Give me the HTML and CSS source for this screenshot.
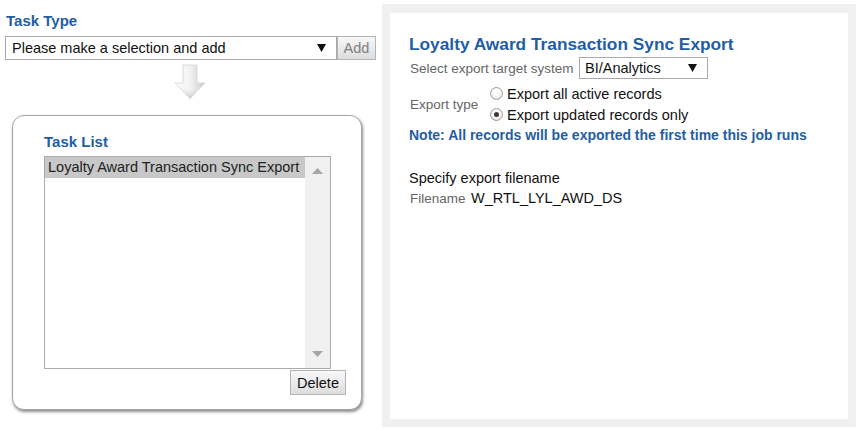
FILE: index.html
```html
<!DOCTYPE html>
<html>
<head>
<meta charset="utf-8">
<link rel="stylesheet" href="styles.css">
</head>
<body>
<div class="page">
  <div class="left">
    <div class="heading task-type-title">Task Type</div>
    <div class="type-row">
      <div class="fake-select type-select">
        <span>Please make a selection and add</span>
        <svg class="caret" width="9" height="8" viewBox="0 0 9 8"><polygon points="0,0 9,0 4.5,8" fill="#111"/></svg>
      </div>
      <div class="btn add-btn">Add</div>
    </div>
    <div class="arrow-wrap">
      <svg width="32" height="36" viewBox="0 0 32 36">
        <defs>
          <linearGradient id="ag" x1="0" y1="0" x2="1" y2="0">
            <stop offset="0" stop-color="#ffffff"/>
            <stop offset="0.5" stop-color="#f2f2f2"/>
            <stop offset="1" stop-color="#c9c9c9"/>
          </linearGradient>
          <linearGradient id="av" x1="0" y1="0" x2="0" y2="1">
            <stop offset="0.6" stop-color="#ffffff" stop-opacity="0"/>
            <stop offset="1" stop-color="#bdbdbd" stop-opacity="0.8"/>
          </linearGradient>
        </defs>
        <polygon points="9,1 23,1 23,19 31,19 16,34.5 1,19 9,19" fill="url(#ag)" stroke="#dadada" stroke-width="1"/>
        <polygon points="9,1 23,1 23,19 31,19 16,34.5 1,19 9,19" fill="url(#av)"/>
      </svg>
    </div>
    <div class="task-box">
      <div class="heading">Task List</div>
      <div class="listbox">
        <div class="list-items">
          <div class="list-item selected">Loyalty Award Transaction Sync Export</div>
        </div>
        <div class="scrollbar">
          <svg width="11" height="6" viewBox="0 0 11 6"><polygon points="0,6 11,6 5.5,0" fill="#a6a6a6"/></svg>
          <svg width="11" height="6" viewBox="0 0 11 6"><polygon points="0,0 11,0 5.5,6" fill="#a6a6a6"/></svg>
        </div>
      </div>
      <div class="btn-row">
        <div class="btn delete-btn">Delete</div>
      </div>
    </div>
  </div>
  <div class="right">
    <div class="panel">
      <div class="panel-title">Loyalty Award Transaction Sync Export</div>
      <div class="target-row">
        <span class="label">Select export target system</span>
        <div class="fake-select target-select">
          <span>BI/Analytics</span>
          <svg class="caret" width="9" height="8" viewBox="0 0 9 8"><polygon points="0,0 9,0 4.5,8" fill="#111"/></svg>
        </div>
      </div>
      <div class="type-group">
        <span class="label type-label">Export type</span>
        <div class="radios">
          <div class="radio-line"><span class="radio"></span><span>Export all active records</span></div>
          <div class="radio-line"><span class="radio checked"></span><span>Export updated records only</span></div>
        </div>
      </div>
      <div class="note">Note: All records will be exported the first time this job runs</div>
      <div class="spec">Specify export filename</div>
      <div class="file-row">
        <span class="label">Filename</span>
        <span class="file-value">W_RTL_LYL_AWD_DS</span>
      </div>
    </div>
  </div>
</div>
</body>
</html>
```
FILE: styles.css
```css
html, body {
  margin: 0;
  padding: 0;
  background: #ffffff;
}
body {
  font-family: "Liberation Sans", Arial, sans-serif;
  width: 860px;
  height: 431px;
  overflow: hidden;
  color: #111;
}
.page {
  display: flex;
  align-items: flex-start;
}
.left {
  width: 382px;
  flex: none;
}
.heading {
  font-size: 15px;
  font-weight: bold;
  line-height: 18px;
  color: #1f5ea7;
}
.task-type-title {
  margin: 12px 0 0 6px;
}
.type-row {
  display: flex;
  margin: 6px 0 0 5px;
  height: 24px;
}
.fake-select {
  box-sizing: border-box;
  border: 1px solid #a9a9a9;
  display: flex;
  align-items: center;
  justify-content: space-between;
  font-size: 14.5px;
  color: #111;
  background: #fff;
}
.type-select {
  width: 332px;
  height: 24px;
  padding: 0 10px 0 6px;
}
.caret {
  display: block;
}
.btn {
  box-sizing: border-box;
  border: 1px solid #b4b4b4;
  background: linear-gradient(#f8f8f8, #dddddd);
  display: flex;
  align-items: center;
  justify-content: center;
  font-size: 14.5px;
}
.add-btn {
  width: 39px;
  height: 24px;
  color: #808080;
}
.arrow-wrap {
  margin: 4px 0 0 174px;
  height: 36px;
}
.arrow-wrap svg {
  display: block;
}
.task-box {
  margin: 15px 0 0 12px;
  width: 350px;
  height: 295px;
  box-sizing: border-box;
  border: 1px solid #a3a3a3;
  border-radius: 12px;
  padding: 17px 0 0 31px;
  box-shadow: 1px 2px 3px rgba(0, 0, 0, 0.45);
  background: #fff;
}
.listbox {
  margin-top: 5px;
  width: 287px;
  height: 213px;
  box-sizing: border-box;
  border: 1px solid #ababab;
  display: flex;
}
.list-items {
  flex: 1;
}
.list-item {
  height: 21px;
  line-height: 21px;
  padding-left: 3px;
  font-size: 14.5px;
  color: #222;
  white-space: nowrap;
}
.list-item.selected {
  background: #c8c8c8;
}
.scrollbar {
  width: 25px;
  background: #f0f0f0;
  display: flex;
  flex-direction: column;
  justify-content: space-between;
  align-items: center;
  padding: 11px 0 11px;
  box-sizing: border-box;
}
.scrollbar svg {
  display: block;
}
.btn-row {
  width: 302px;
  display: flex;
  justify-content: flex-end;
  margin-top: 1px;
}
.delete-btn {
  width: 56px;
  height: 25px;
  color: #111;
}
.right {
  width: 474px;
  height: 423px;
  margin-top: 4px;
  background: #f0f0f2;
  padding: 9px 8px 8px;
  box-sizing: border-box;
  flex: none;
}
.panel {
  background: #fff;
  height: 100%;
  box-sizing: border-box;
  padding: 21px 0 0 19px;
}
.panel-title {
  font-size: 17.3px;
  font-weight: bold;
  line-height: 20px;
  color: #1f5ea7;
}
.label {
  font-size: 13.5px;
  color: #666;
}
.target-row {
  display: flex;
  align-items: center;
  margin-top: 3px;
  height: 22px;
}
.target-row .label {
  padding-left: 1px;
  width: 169px;
}
.target-select {
  width: 129px;
  height: 22px;
  padding: 0 10px 0 5px;
}
.type-group {
  display: flex;
  align-items: center;
  margin-top: 4px;
}
.type-label {
  width: 80px;
  padding-left: 1px;
}
.radio-line {
  display: flex;
  align-items: center;
  height: 21px;
  font-size: 14.5px;
  color: #111;
}
.radio {
  width: 13px;
  height: 13px;
  box-sizing: border-box;
  border-radius: 50%;
  border: 1px solid #9e9e9e;
  background: radial-gradient(circle at 50% 40%, #ffffff 30%, #d8d8d8 100%);
  margin-right: 4px;
  display: flex;
  align-items: center;
  justify-content: center;
}
.radio.checked::after {
  content: "";
  width: 5px;
  height: 5px;
  border-radius: 50%;
  background: #3a3a3a;
}
.note {
  margin-top: 1px;
  font-size: 14px;
  font-weight: bold;
  line-height: 18px;
  color: #1f5ea7;
}
.spec {
  margin-top: 25px;
  font-size: 14.5px;
  line-height: 18px;
  color: #111;
}
.file-row {
  display: flex;
  align-items: center;
  height: 18px;
  margin-top: 2px;
}
.file-row .label {
  padding-left: 1px;
  width: 61px;
}
.file-value {
  font-size: 14.5px;
  color: #111;
}
```
